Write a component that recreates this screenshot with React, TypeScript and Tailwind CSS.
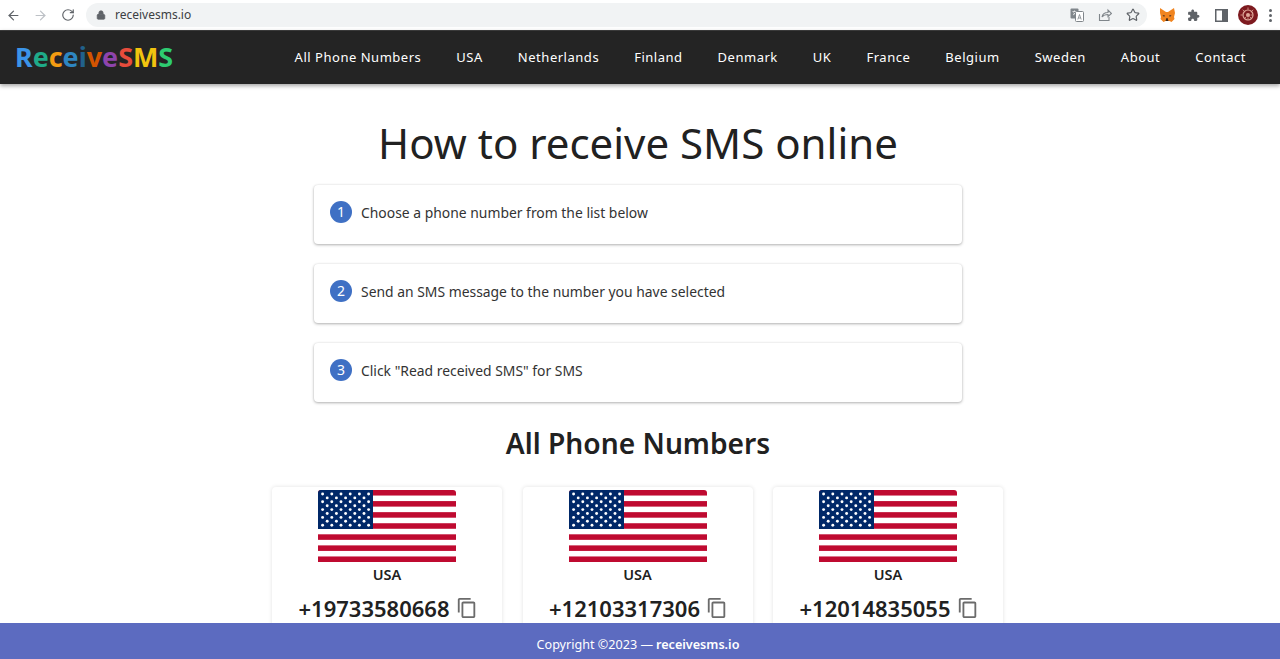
import React from "react";
import { ArrowLeft, ArrowRight, RotateCw, Lock, Star } from "lucide-react";

const font = "font-['Noto_Sans','Open_Sans',sans-serif]";

const logo: [string, string][] = [
  ["R", "text-[#3b94e8]"],
  ["e", "text-[#1fab89]"],
  ["c", "text-[#f39c12]"],
  ["e", "text-[#2e86c1]"],
  ["i", "text-[#21618c]"],
  ["v", "text-[#d35400]"],
  ["e", "text-[#8e44ad]"],
  ["S", "text-[#e74c3c]"],
  ["M", "text-[#f1c40f]"],
  ["S", "text-[#2ecc71]"],
];

const nav = ["All Phone Numbers", "USA", "Netherlands", "Finland", "Denmark", "UK", "France", "Belgium", "Sweden", "About", "Contact"];

const steps = ["Choose a phone number from the list below", "Send an SMS message to the number you have selected", 'Click "Read received SMS" for SMS'];

const numbers = ["+19733580668", "+12103317306", "+12014835055"];

function Flag({ id }: { id: string }) {
  const stars: React.ReactNode[] = [];
  for (let r = 0; r < 9; r++) {
    const n = r % 2 === 0 ? 6 : 5;
    for (let c = 0; c < n; c++) {
      const x = (r % 2 === 0 ? 4.6 : 9.2) + c * 9.2;
      const y = 4 + r * 3.9;
      stars.push(<circle key={`${r}-${c}`} cx={x} cy={y} r={1.45} fill="#ffffff" />);
    }
  }
  const stripes: React.ReactNode[] = [];
  const h = 72 / 13;
  for (let i = 0; i < 13; i += 2) {
    stripes.push(<rect key={i} x={0} y={i * h} width={138} height={h} fill="#bf0a30" />);
  }
  return (
    <svg width="138" height="72" viewBox="0 0 138 72" className="block">
      <defs>
        <clipPath id={id}>
          <path d="M3 0H135A3 3 0 0 1 138 3V72H0V3A3 3 0 0 1 3 0Z" />
        </clipPath>
      </defs>
      <g clipPath={`url(#${id})`}>
        <rect width="138" height="72" fill="#ffffff" />
        {stripes}
        <rect width="55" height="39" fill="#002868" />
        {stars}
      </g>
    </svg>
  );
}

function CopyIcon() {
  return (
    <svg width="22" height="22" viewBox="0 0 24 24" fill="#6b6b6b" className="block">
      <path d="M16 1H4c-1.1 0-2 .9-2 2v14h2V3h12V1zm3 4H8c-1.1 0-2 .9-2 2v14c0 1.1.9 2 2 2h11c1.100 0 2-.9 2-2V7c0-1.100-.9-2-2-2zm0 16H8V7h11v14z" />
    </svg>
  );
}

function Card({ number }: { number: string }) {
  return (
    <div className="w-[230px] h-[160px] bg-white rounded-[4px] shadow-[0_0_4px_rgba(0,0,0,0.12)] flex flex-col items-center pt-[3px]">
      <Flag id={`clip${number}`} />
      <div className="mt-[2px] text-[14.500px] leading-[20px] font-semibold text-[#212121]">USA</div>
      <div className="mt-[9px] flex items-center gap-[6px] pl-[2px]">
        <span className="text-[22px] leading-[30px] font-semibold text-[#212121]">{number}</span>
        <CopyIcon />
      </div>
    </div>
  );
}

export default function App() {
  return (
    <div className={`${font} relative h-[659px] overflow-hidden bg-white flex flex-col`}>
      <div className="h-[30px] shrink-0 bg-white flex items-center pl-[6px] pr-[8px]">
        <ArrowLeft size={15} className="text-[#5f6368]" />
        <ArrowRight size={15} className="ml-[12px] text-[#bdc1c6]" />
        <RotateCw size={14} className="ml-[13px] text-[#5f6368]" />
        <div className="ml-[11px] w-[1062px] h-[24px] rounded-full bg-[#f1f3f4] flex items-center pl-[10px] pr-[7px]">
          <Lock size={10} className="text-[#5f6368]" fill="#5f6368" />
          <span className="ml-[9px] text-[12px] text-[#3c4043]">receivesms.io</span>
          <div className="ml-auto flex items-center gap-[14px]">
            <svg width="14" height="14" viewBox="0 0 14 14" className="block">
              <rect x="0.500" y="0.500" width="8" height="10" rx="1" fill="#80868b" />
              <path d="M2.500 3.500h4M4.500 2.500v1M3 7c1.500-1 2.500-2 3-3.500M3.500 4.500c.5 1 1.500 2 2.500 2.500" stroke="#fff" strokeWidth="0.700" fill="none" />
              <rect x="5.500" y="3.500" width="8" height="10" rx="1" fill="#fff" stroke="#80868b" />
              <path d="M7.800 11.500l1.700-5 1.700 5M8.400 10h2.200" stroke="#80868b" strokeWidth="0.800" fill="none" />
            </svg>
            <svg width="14" height="14" viewBox="0 0 14 14" fill="none" stroke="#80868b" strokeWidth="1.100" className="block">
              <path d="M1.500 6v6.500h9.500V9" />
              <path d="M4 9c.5-3 3-4.500 6-4.500V2l3.500 3.500L10 8.500V6.500c-2.500 0-4.500.5-6 2.500z" />
            </svg>
            <Star size={14} className="text-[#5f6368]" strokeWidth={2} />
          </div>
        </div>
        <div className="ml-[12px] flex items-center">
          <svg width="16" height="15" viewBox="0 0 16 15" className="block">
            <path d="M1 0l6 4h2l6-4 1 5-1 4 .5 2-3 3-2-1H6.500l-2 1-3-3L2 9 1 5z" fill="#f0841f" />
            <path d="M6.500 13l1-3h1l1 3z" fill="#3a2a1e" />
            <path d="M3.500 7l2.500 .5-1 1.500zM12.500 7L10 7.500l1 1.500z" fill="#4a3020" />
          </svg>
          <svg width="13" height="13" viewBox="0 0 24 24" fill="#5f6368" className="block ml-[12px]">
            <path d="M20.500 11H19V7c0-1.100-.9-2-2-2h-4V3.500C13 2.120 11.880 1 10.500 1S8 2.120 8 3.500V5H4c-1.100 0-2 .9-2 2v3.800h1.500c1.500 0 2.700 1.200 2.700 2.700S5 16.200 3.500 16.200H2V20c0 1.100.9 2 2 2h3.800v-1.500c0-1.500 1.200-2.700 2.700-2.700s2.700 1.200 2.700 2.700V22H17c1.100 0 2-.9 2-2v-4h1.500c1.380 0 2.500-1.120 2.500-2.500S21.880 11 20.500 11z" />
          </svg>
          <svg width="13" height="13" viewBox="0 0 13 13" className="block ml-[15px]">
            <rect x="0.750" y="0.750" width="11.500" height="11.500" fill="none" stroke="#5f6368" strokeWidth="1.500" />
            <rect x="7" y="1" width="5" height="11" fill="#5f6368" />
          </svg>
          <svg width="20" height="20" viewBox="0 0 20 20" className="block ml-[10px]">
            <circle cx="10" cy="10" r="10" fill="#7d1a1f" />
            <circle cx="10" cy="10" r="5" fill="none" stroke="#e0a89a" strokeWidth="1.200" />
            <path d="M10 2.500v15M2.500 10h15M4.700 4.700l10.600 10.600M15.300 4.700L4.700 15.300" stroke="#e0a89a" strokeWidth="0.800" strokeDasharray="2 8" />
            <circle cx="10" cy="10" r="2" fill="#e0a89a" />
          </svg>
          <div className="flex flex-col gap-[2px] ml-[11px]">
            <span className="w-[3px] h-[3px] rounded-full bg-[#5f6368]" />
            <span className="w-[3px] h-[3px] rounded-full bg-[#5f6368]" />
            <span className="w-[3px] h-[3px] rounded-full bg-[#5f6368]" />
          </div>
        </div>
      </div>

      <header className="h-[54px] shrink-0 bg-[#242424] border-t border-[#3a3a3a] shadow-[0_2px_4px_rgba(0,0,0,0.35)] flex items-center pl-[15px] pr-[34px] justify-between z-10">
        <div className="text-[26.900px] font-bold leading-none">
          {logo.map(([c, cls], i) => (
            <span key={i} className={cls}>
              {c}
            </span>
          ))}
        </div>
        <nav className="flex items-center gap-[35px]">
          {nav.map((n) => (
            <span key={n} className="text-[13px] font-normal tracking-[0.52px] text-white">
              {n}
            </span>
          ))}
        </nav>
      </header>

      <main className="flex flex-col items-center pr-[4px]">
        <h1 className="mt-[29px] text-[42px] leading-[60px] text-[#212121] font-normal">How to receive SMS online</h1>
        <div className="mt-[12px] flex flex-col gap-[20px] w-[648px]">
          {steps.map((s, i) => (
            <div key={s} className="h-[59px] bg-white rounded-[4px] shadow-[0_1px_3px_rgba(0,0,0,0.3),0_0_2px_rgba(0,0,0,0.08)] flex items-center pl-[16px] pb-[6px]">
              <span className="w-[22px] h-[22px] rounded-full bg-[#3f70c4] text-white text-[14px] flex items-center justify-center">{i + 1}</span>
              <span className="ml-[9px] mt-[4px] text-[13.900px] text-[#333333]">{s}</span>
            </div>
          ))}
        </div>
        <h2 className="mt-[21px] text-[28.200px] leading-[40px] font-semibold text-[#212121]">All Phone Numbers</h2>
        <div className="mt-[24px] flex gap-[20.500px] pr-[1px]">
          {numbers.map((n) => (
            <Card key={n} number={n} />
          ))}
        </div>
      </main>

      <footer className="absolute left-0 right-0 bottom-0 h-[36px] bg-[#5c6bc0] flex items-center justify-center text-[12.600px] text-white z-20 pr-[4px] pt-[9px]">
        <span>Copyright ©2023 — </span>
        <span className="font-semibold ml-[3px]">receivesms.io</span>
      </footer>
    </div>
  );
}
